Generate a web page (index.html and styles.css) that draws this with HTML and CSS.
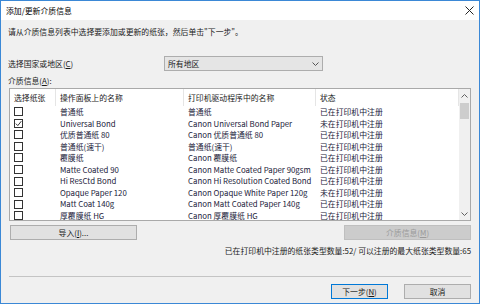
FILE: index.html
```html
<!DOCTYPE html>
<html lang="zh-CN">
<head>
    <meta charset="UTF-8">
    <title>添加/更新介质信息</title>
    <link rel="stylesheet" href="styles.css">
</head>
<body>
    <div class="window">
        <div class="titlebar">
            <span class="title">添加/更新介质信息</span>
            <svg class="close" width="9" height="9" viewBox="0 0 9 9">
                <path d="M0.5 0.5 L8.5 8.5 M8.5 0.5 L0.5 8.5" stroke="#222" stroke-width="1" fill="none"/>
            </svg>
        </div>
        <div class="content">
            <p class="intro">请从介质信息列表中选择要添加或更新的纸张，然后单击"下一步"。</p>

            <div class="region-row">
                <span class="label">选择国家或地区(<u>C</u>)</span>
                <div class="select">
                    <span>所有地区</span>
                    <svg width="7" height="4" viewBox="0 0 7 4"><path d="M0.5 0.5 L3.5 3.5 L6.5 0.5" stroke="#555" fill="none"/></svg>
                </div>
            </div>

            <div class="list-label">介质信息(<u>A</u>):</div>

            <div class="list">
                <div class="list-main">
                    <div class="row header">
                        <div class="cell">选择纸张</div>
                        <div class="cell">操作面板上的名称</div>
                        <div class="cell">打印机驱动程序中的名称</div>
                        <div class="cell">状态</div>
                    </div>
                    <div class="row"><div class="cell"><span class="check"></span></div><div class="cell">普通纸</div><div class="cell">普通纸</div><div class="cell">已在打印机中注册</div></div>
                    <div class="row"><div class="cell"><span class="check checked"><svg width="7" height="7" viewBox="0 0 7 7"><path d="M0.8 3.6 L2.8 5.6 L6.3 1.2" stroke="#333" fill="none"/></svg></span></div><div class="cell">Universal Bond</div><div class="cell">Canon Universal Bond Paper</div><div class="cell">未在打印机中注册</div></div>
                    <div class="row"><div class="cell"><span class="check"></span></div><div class="cell">优质普通纸 80</div><div class="cell">Canon 优质普通纸 80</div><div class="cell">已在打印机中注册</div></div>
                    <div class="row"><div class="cell"><span class="check"></span></div><div class="cell">普通纸(速干)</div><div class="cell">普通纸(速干)</div><div class="cell">已在打印机中注册</div></div>
                    <div class="row"><div class="cell"><span class="check"></span></div><div class="cell">覆膜纸</div><div class="cell">Canon 覆膜纸</div><div class="cell">已在打印机中注册</div></div>
                    <div class="row"><div class="cell"><span class="check"></span></div><div class="cell">Matte Coated 90</div><div class="cell">Canon Matte Coated Paper 90gsm</div><div class="cell">已在打印机中注册</div></div>
                    <div class="row"><div class="cell"><span class="check"></span></div><div class="cell">Hi ResCtd Bond</div><div class="cell">Canon Hi Resolution Coated Bond</div><div class="cell">已在打印机中注册</div></div>
                    <div class="row"><div class="cell"><span class="check"></span></div><div class="cell">Opaque Paper 120</div><div class="cell">Canon Opaque White Paper 120g</div><div class="cell">未在打印机中注册</div></div>
                    <div class="row"><div class="cell"><span class="check"></span></div><div class="cell">Matt Coat 140g</div><div class="cell">Canon Matt Coated Paper 140g</div><div class="cell">已在打印机中注册</div></div>
                    <div class="row"><div class="cell"><span class="check"></span></div><div class="cell">厚覆膜纸 HG</div><div class="cell">Canon 厚覆膜纸 HG</div><div class="cell">已在打印机中注册</div></div>
                </div>
                <div class="scrollbar">
                    <div class="arrow"><svg width="7" height="4" viewBox="0 0 7 4"><path d="M0.5 3.5 L3.5 0.5 L6.5 3.5" stroke="#606060" fill="none"/></svg></div>
                    <div class="track"><div class="thumb"></div></div>
                    <div class="arrow"><svg width="7" height="4" viewBox="0 0 7 4"><path d="M0.5 0.5 L3.5 3.5 L6.5 0.5" stroke="#606060" fill="none"/></svg></div>
                </div>
            </div>

            <div class="action-row">
                <button class="btn">导入(<u>I</u>)...</button>
                <button class="btn disabled">介质信息(<u>M</u>)</button>
            </div>

            <div class="count">已在打印机中注册的纸张类型数量:52/ 可以注册的最大纸张类型数量:65</div>

            <div class="separator"></div>

            <div class="footer">
                <button class="btn default">下一步(<u>N</u>)</button>
                <button class="btn">取消</button>
            </div>
        </div>
    </div>
</body>
</html>
```

FILE: styles.css
```css
* {
    margin: 0;
    padding: 0;
    box-sizing: border-box;
    font-family: "Noto Sans CJK SC", sans-serif;
}

body {
    width: 480px;
    height: 304px;
    overflow: hidden;
    background: #f0f0f0;
    font-size: 7.85px;
    color: #1a1a1a;
}

.window {
    width: 480px;
    height: 304px;
    border: 1px solid #3b88d6;
    display: flex;
    flex-direction: column;
    background: #f0f0f0;
}

.titlebar {
    height: 19px;
    background: #ffffff;
    display: flex;
    align-items: center;
    justify-content: space-between;
    padding: 0 5px 0 5px;
    flex-shrink: 0;
}

.title {
    font-size: 7.85px;
    color: #000;
}

.content {
    flex: 1;
    padding: 0 8px 0 7px;
    display: flex;
    flex-direction: column;
}

.intro {
    margin-top: 6px;
    line-height: 12px;
}

.region-row {
    margin-top: 18px;
    height: 15px;
    display: flex;
    align-items: center;
}

.label {
    width: 156px;
}

.select {
    width: 159px;
    height: 15px;
    background: #e5e5e5;
    border: 1px solid #adadad;
    display: flex;
    align-items: center;
    justify-content: space-between;
    padding: 0 3px 0 3px;
}

.list-label {
    margin-top: 4px;
    line-height: 12px;
}

.list {
    margin-top: 1px;
    margin-left: 1px;
    height: 133px;
    background: #ffffff;
    border: 1px solid #a9a9a9;
    display: flex;
    overflow: hidden;
}

.list-main {
    flex: 1;
    overflow: hidden;
}

.row {
    display: grid;
    grid-template-columns: 46px 128px 132px 1fr;
    height: 11.55px;
    align-items: center;
    color: #22223a;
}

.row .cell {
    padding-left: 4px;
    white-space: nowrap;
    overflow: hidden;
    line-height: 11.55px;
    display: flex;
    align-items: center;
}

.row.header {
    height: 17px;
    color: #1a1a1a;
}

.row.header .cell {
    height: 17px;
    line-height: 17px;
    border-right: 1px solid #e5e5e5;
}

.check {
    width: 9px;
    height: 9px;
    border: 1px solid #333333;
    background: #ffffff;
    display: flex;
    align-items: center;
    justify-content: center;
}

.scrollbar {
    width: 11px;
    background: #f0f0f0;
    display: flex;
    flex-direction: column;
}

.arrow {
    height: 13px;
    display: flex;
    align-items: center;
    justify-content: center;
}

.track {
    flex: 1;
    padding: 1px 1px 0 1px;
}

.thumb {
    height: 16px;
    background: #cdcdcd;
}

.action-row {
    margin-top: 4px;
    margin-left: 2px;
    height: 15px;
    display: flex;
    justify-content: space-between;
}

.btn {
    height: 15px;
    width: 127px;
    background: #e1e1e1;
    border: 1px solid #adadad;
    font-size: 7.85px;
    color: #1a1a1a;
}

.btn.disabled {
    background: #cccccc;
    border-color: #bfbfbf;
    color: #9a9a9a;
}

.count {
    margin-top: 5px;
    line-height: 12px;
    text-align: right;
}

.separator {
    margin-top: 19px;
    margin-left: 1px;
    border-top: 1px solid #c4c4c4;
}

.footer {
    margin-top: 7px;
    display: flex;
    justify-content: flex-end;
    gap: 16px;
}

.footer .btn {
    width: 67px;
    height: 15px;
}

.footer .btn.default {
    width: 57px;
    border-color: #0078d7;
}
```
